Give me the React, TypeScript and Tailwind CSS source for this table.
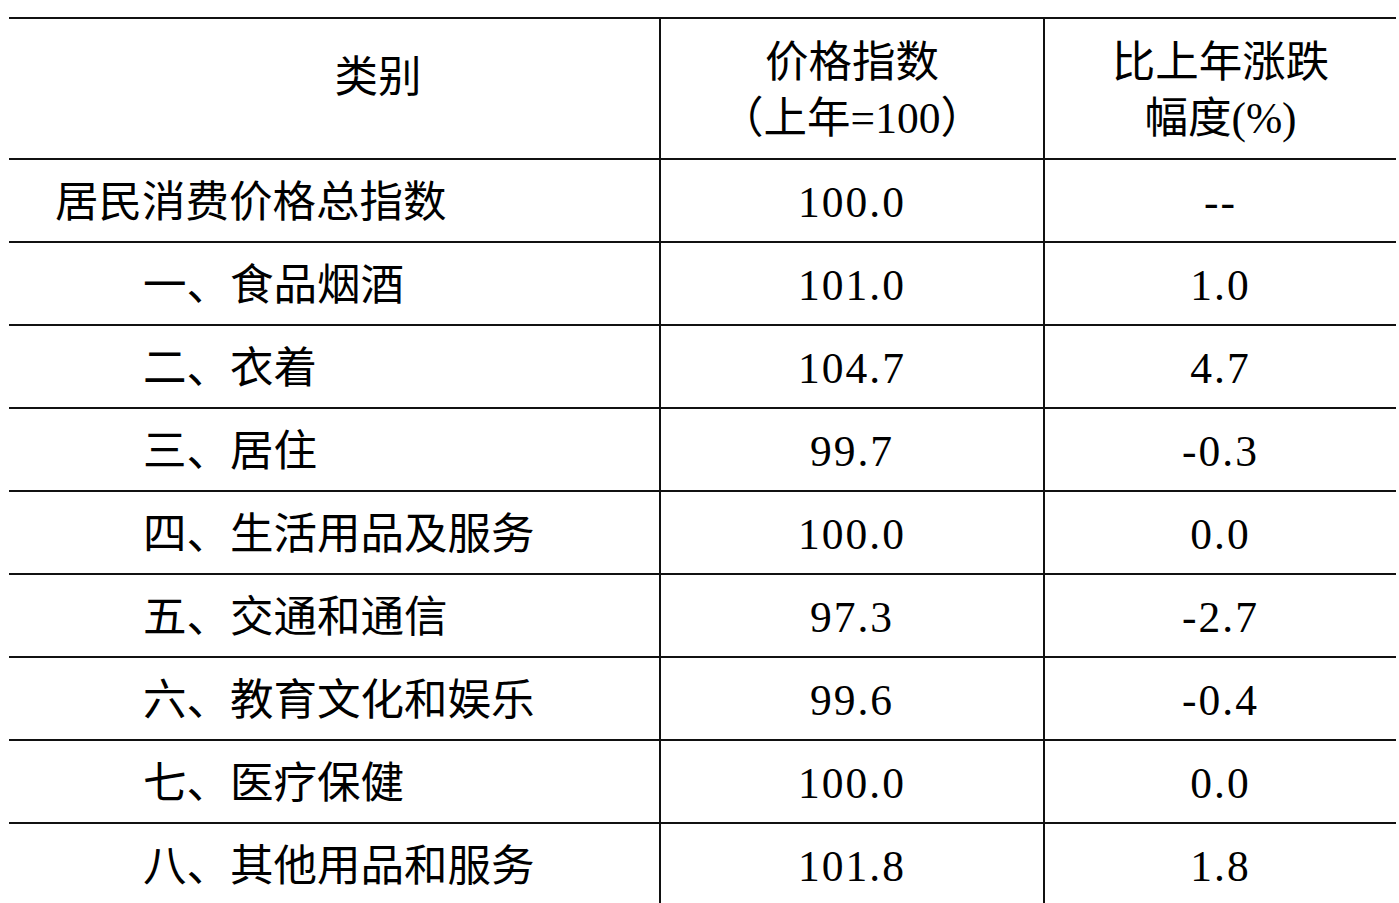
const rows: { name: string; index: string; change: string; sub: boolean }[] = [
  { name: "居民消费价格总指数", index: "100.0", change: "--", sub: false },
  { name: "一、食品烟酒", index: "101.0", change: "1.0", sub: true },
  { name: "二、衣着", index: "104.7", change: "4.7", sub: true },
  { name: "三、居住", index: "99.7", change: "-0.3", sub: true },
  { name: "四、生活用品及服务", index: "100.0", change: "0.0", sub: true },
  { name: "五、交通和通信", index: "97.3", change: "-2.7", sub: true },
  { name: "六、教育文化和娱乐", index: "99.6", change: "-0.4", sub: true },
  { name: "七、医疗保健", index: "100.0", change: "0.0", sub: true },
  { name: "八、其他用品和服务", index: "101.8", change: "1.8", sub: true },
];

const font = "font-['Liberation_Serif','Noto_Sans_CJK_SC',serif]";

export default function App() {
  return (
    <div className={`min-h-screen bg-white pl-[9px] pt-[17px] text-[43.5px] text-black ${font}`}>
      <div className="w-[1387px]">
        <div className="grid h-[141px] grid-cols-[650px_384px_353px] border-t-2 border-[#111]">
          <div className="flex items-center justify-center pb-[22px] pl-[88px]">类别</div>
          <div className="flex flex-col items-center justify-center border-l-2 border-[#111] pt-[2px] leading-[56px]">
            <span>价格指数</span>
            <span>（上年=100）</span>
          </div>
          <div className="flex flex-col items-center justify-center border-l-2 border-[#111] pt-[2px] leading-[56px]">
            <span>比上年涨跌</span>
            <span>幅度(%)</span>
          </div>
        </div>
        {rows.map((r) => (
          <div
            key={r.name}
            className="grid h-[83px] grid-cols-[650px_384px_353px] border-t-2 border-[#111]"
          >
            <div className={`flex items-center pt-[5px] ${r.sub ? "pl-[134px]" : "pl-[46px]"}`}>
              {r.name}
            </div>
            <div className="flex items-center justify-center border-l-2 border-[#111] pt-[4px] tracking-[2px]">
              {r.index}
            </div>
            <div className="flex items-center justify-center border-l-2 border-[#111] pt-[4px] tracking-[2px]">
              {r.change}
            </div>
          </div>
        ))}
      </div>
    </div>
  );
}
